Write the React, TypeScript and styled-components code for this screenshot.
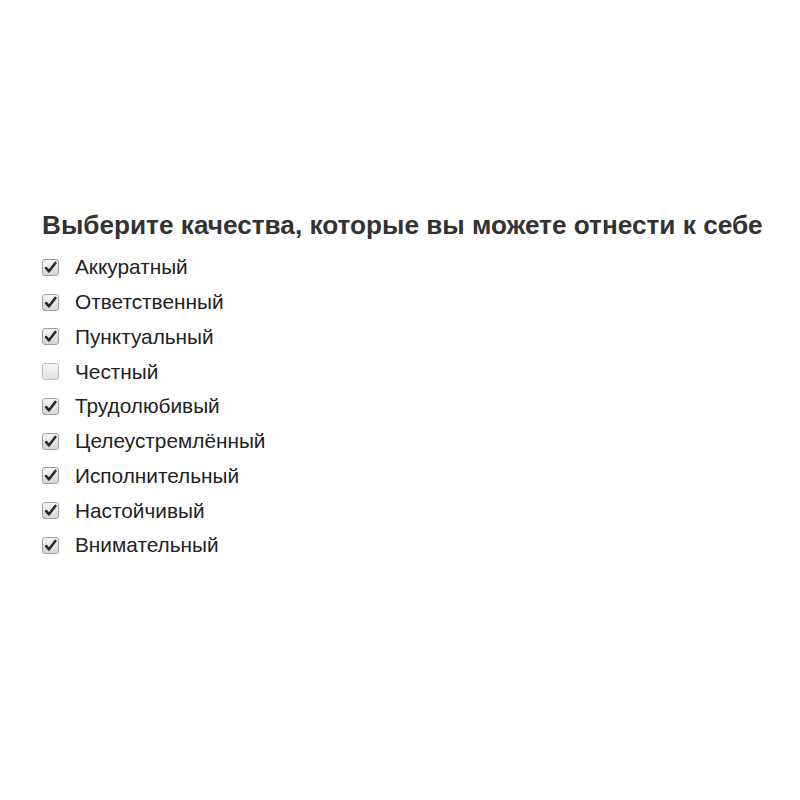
import styled, { createGlobalStyle } from "styled-components";

const GlobalStyle = createGlobalStyle`
  html, body {
    margin: 0;
    padding: 0;
    background: #ffffff;
  }
  body {
    font-family: "Liberation Sans", Arial, sans-serif;
  }
`;

const Page = styled.div`
  width: 800px;
  height: 800px;
  box-sizing: border-box;
  padding: 207px 0 0 42px;
`;

const Title = styled.h2`
  margin: 0 0 7px;
  font-size: 26.2px;
  font-weight: bold;
  color: #333333;
  line-height: 36px;
  white-space: nowrap;
`;

const List = styled.div`
  display: flex;
  flex-direction: column;
`;

const Row = styled.label`
  display: flex;
  align-items: center;
  height: 34.75px;
  gap: 16px;
  font-size: 20.8px;
  color: #222222;
`;

const Box = styled.span<{ checked: boolean }>`
  width: 17px;
  height: 17px;
  box-sizing: border-box;
  border: 1px solid #a0a0a0;
  border-radius: 3px;
  background: linear-gradient(#f6f6f6, #d6d6d6);
  display: flex;
  align-items: center;
  justify-content: center;
  flex-shrink: 0;
  opacity: ${({ checked }) => (checked ? 1 : 0.7)};
`;

const items: { label: string; checked: boolean }[] = [
  { label: "Аккуратный", checked: true },
  { label: "Ответственный", checked: true },
  { label: "Пунктуальный", checked: true },
  { label: "Честный", checked: false },
  { label: "Трудолюбивый", checked: true },
  { label: "Целеустремлённый", checked: true },
  { label: "Исполнительный", checked: true },
  { label: "Настойчивый", checked: true },
  { label: "Внимательный", checked: true },
];

function Check() {
  return (
    <svg width="13" height="13" viewBox="0 0 12 12">
      <path d="M2 6.5 L4.6 9.5 L10.5 1.8" fill="none" stroke="#2a2a2a" strokeWidth="2.4" strokeLinecap="round" strokeLinejoin="round" />
    </svg>
  );
}

export default function App() {
  return (
    <>
      <GlobalStyle />
      <Page>
        <Title>Выберите качества, которые вы можете отнести к себе</Title>
        <List>
          {items.map((item) => (
            <Row key={item.label}>
              <Box checked={item.checked}>{item.checked && <Check />}</Box>
              {item.label}
            </Row>
          ))}
        </List>
      </Page>
    </>
  );
}
